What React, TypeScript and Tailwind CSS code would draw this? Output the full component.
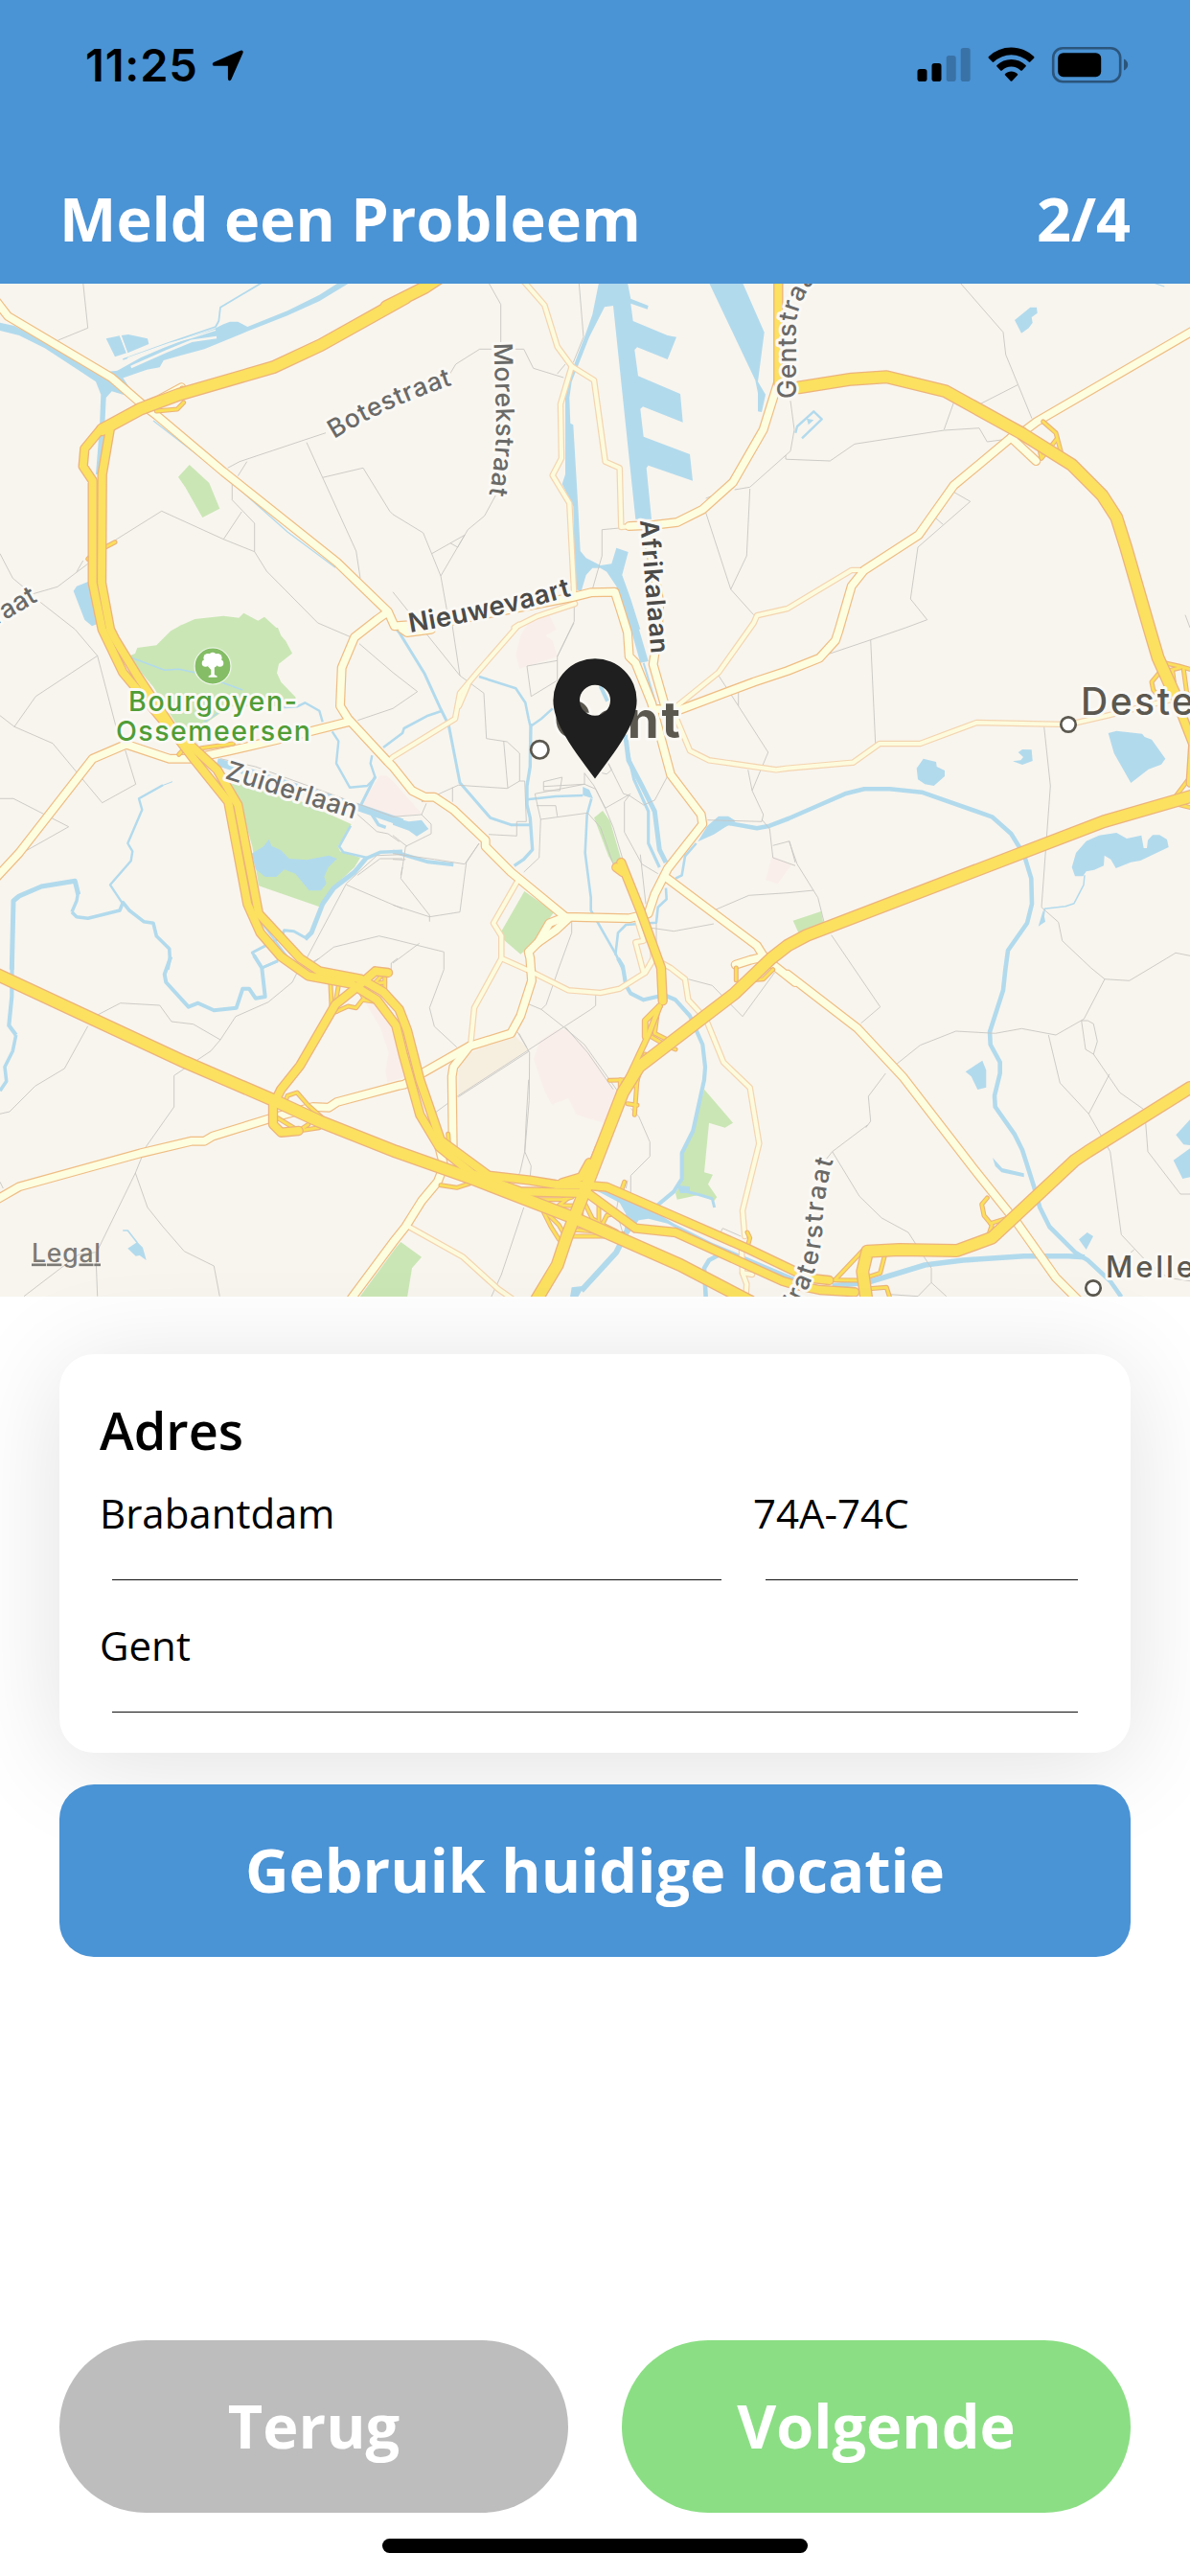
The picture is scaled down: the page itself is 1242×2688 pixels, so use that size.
import React from "react";

/* ------------------------------------------------------------------ */
/* Map geometry                                                        */
/* ------------------------------------------------------------------ */

/* The map is divided in nine tiles; tile units are a third of a pixel. */
const TILES: Record<string, [number, number]> = {
  A: [0, 295],
  B: [410, 295],
  C: [822, 295],
  D: [0, 650],
  E: [410, 650],
  F: [822, 650],
  G: [0, 1000],
  H: [410, 1000],
  I: [822, 1000],
};

/* "A 0,70 25,105 B 0,80" becomes an svg point list in page pixels. */
function pts(source: string): string {
  let [ox, oy] = TILES.A;
  const out: string[] = [];
  for (const token of source.split(" ")) {
    if (TILES[token]) {
      [ox, oy] = TILES[token];
    } else {
      const [x, y] = token.split(",").map(Number);
      out.push(`${(ox + x / 3).toFixed(1)},${(oy + y / 3).toFixed(1)}`);
    }
  }
  return out.join(" ");
}

const PARKS = [
  "A 558,608 593,570 655,627 688,707 634,735 580,640",
  "D 400,105 423,96 430,78 490,70 535,25 580,0 A 555,1078 610,1053 700,1043 748,1049 763,1034 808,1058 828,1046 865,1080 D 870,15 880,40 895,57 915,95 873,128 867,157 880,185 925,232 930,260 720,262 650,310 620,380 560,330 480,200",
  "D 700,470 760,500 900,540 1100,630 1058,700 1065,715 1128,735 1110,765 1040,830 1005,890 810,823 790,700 750,560",
  "E 630,610 657,588 680,620 715,740 690,755 675,730",
  "E 412,840 505,905 475,945 440,1000 400,1037 345,990 340,965",
  "F 17,932 105,903 112,940 35,972",
  "G 1125,1062 1240,905 H 25,888 90,935 60,970 45,1062",
  "H 975,410 1065,515 1040,530 990,515 975,670 1002,677 987,707 1015,748 1005,760 960,740 890,755 885,735 910,690 905,610 940,530",
];

const PINK = [
  "D 1130,570 1190,478 1210,478 1230,495 E 90,597 0,607 -10,603",
  "E 385,100 400,40 425,0 B 430,1060 490,1042 510,1080 E 512,20 478,40 500,55 515,105 397,143",
  "H 460,260 510,225 540,222 600,275 700,420 660,515 575,490 550,438 498,458 475,415 441,315",
  "G 1145,140 1200,150 1260,250 1275,370 1213,388 1207,355 1217,295 1190,215",
  "E 1187,730 1250,755 1205,817 1167,805",
];

const TAN = ["H 230,300 380,240 425,285 205,430 205,350"];

const LAKES = [
  "A 1060,0 1095,0 1000,58 900,103 780,150 640,208 565,228 512,243 500,265 460,272 380,300 355,320 350,285 440,235 510,205 600,170 670,145 700,130 720,122 745,122 775,138 900,88 1000,38",
  "A 332,175 375,166 397,220 360,232",
  "A 380,165 402,162 462,175 466,192 400,220",
  "A 0,125 45,135 160,195 260,245 320,280 370,275 440,380 400,355 350,340 332,360 328,450 325,560 310,600 300,600 312,450 316,350 300,310 240,270 140,205 60,165 0,150",
  "A 230,965 240,950 278,935 290,1000 305,1068 288,1075 265,1055",
  "D 788,722 825,700 842,678 850,698 880,712 905,738 960,742 1030,728 1055,738 1028,765 1015,795 1022,815 1005,838 968,838 925,785 890,772 865,795 830,795 800,770",
  "E 0,608 50,622 90,617 112,645 75,668 50,650 0,632",
  "E 595,513 615,522 627,550 595,540",
  "E 740,0 765,0 800,120 775,125",
  "E 955,685 985,635 1020,605 1050,605 1075,620 1040,640 1005,662",
  "F 404,455 425,425 465,435 467,450 492,462 492,480 458,510 430,505 408,490",
  "F 722,405 735,396 764,397 767,432 735,444 705,433 730,430 738,420",
  "F 1004,345 1030,338 1110,347 1118,357 1140,365 1183,425 1170,443 1130,458 1075,501 1022,408",
  "F 890,765 903,720 935,683 975,665 1030,657 1062,675 1108,665 1115,705 1125,705 1128,680 1143,664 1165,664 1188,678 1193,702 1105,744 1075,749 1028,768 1012,740 992,728 990,760 960,773 935,778 925,793 900,793",
  "F 800,900 807,935 785,950",
  "I 557,355 610,320 622,350 622,404 595,411 575,370",
  "I 642,624 672,657 740,673 740,685 670,670 650,650",
  "I 912,880 938,858 957,870 935,912",
  "I 1216,553 1260,505 1260,585 1240,583",
  "I 1208,632 1260,595 1260,685 1237,690",
  "C 711,117 760,77 780,77 782,95 764,108 767,125 755,142 732,158",
  "C 60,425 82,430 65,445",
  "B 645,0 735,0 745,50 800,72 797,83 745,65 752,120 860,165 888,170 860,240 765,202 757,210 768,292 900,348 908,437 783,388 775,395 785,482 930,537 939,620 800,572 794,580 810,740 760,740 690,72 663,76 615,170 560,310 553,360 556,440 565,445 580,700 587,840 605,862 650,885 685,880 700,830 737,843 718,915 745,990 775,1085 745,1085 700,950 670,905 650,893 625,893 605,915 590,965 570,960 565,700 530,630 540,600 540,400 540,330 600,170 625,100",
  "B 990,0 1095,0 1163,155 1143,310 1167,350 1155,405 1143,403 1143,345 1135,305",
  "H 640,728 690,735 800,780 880,830 1000,890 1060,915 1260,1000 1260,1015 1100,950 1000,905 860,830 800,815 770,820 740,860 725,855 730,800 710,765",
  "H 560,1030 600,1025 580,1060 555,1060",
  "H 890,710 930,715 930,735 900,735",
  "G 400,908 430,888 447,905 458,945 437,930 425,932",
];

/* [width, points] */
const RIVERS: [number, string][] = [
  [1.8, "A 820,0 690,77 685,120 675,138 530,188 385,240"],
  [1.4, "A 480,432 700,602 900,780 1050,892"],
  [1, "D 540,497 500,512"],
  [2.4, "D 510,508 435,550 445,585 400,690 415,715 410,745 345,820 385,880"],
  [5, "D 37,1085 42,870 60,855 130,825 235,808 245,850"],
  [3.4, "D 245,840 240,870 225,905"],
  [3.6, "D 225,905 240,920 275,925 375,900 385,875 405,900 450,935 480,940 490,980 530,1020 532,1050 525,1085"],
  [4.2, "G 38,-10 37,120 28,210 50,240"],
  [3.6, "G 50,240 40,290 15,340 20,385 0,415"],
  [4, "G 535,-5 515,50 520,75 590,152 620,140 670,163 740,155 760,95 780,95 800,125 830,120 820,30 795,-10"],
  [2.6, "G 820,30 870,8"],
  [3, "D 820,1080 790,1032 880,985 890,962 920,965 955,985"],
  [3, "D 820,1080 870,1058"],
  [2, "D 820,940 900,1045"],
  [5, "D 955,990 975,970 1010,880 1045,830 1110,780 1145,738"],
  [3.6, "D 1145,738 1190,718 1260,715"],
  [2.6, "D 1098,635 1062,700 1075,718 1150,735"],
  [8, "D 680,435 1130,580 1260,625"],
  [4, "E 0,715 110,748 190,757"],
  [3.4, "D 1165,600 1185,632 1208,640"],
  [1.5, "D 410,108 515,148 560,145 610,155 760,210"],
  [1.5, "D 640,310 700,270"],
  [2.4, "D 880,265 930,262 955,250 1000,275 1010,310"],
  [2.4, "D 1040,340 1060,370 1053,440 1095,515 1150,510 1175,485 1160,440 1165,415"],
  [3, "D 1175,480 1130,570"],
  [2.6, "D 1200,390 1260,345 E 35,330 110,290 150,277"],
  [3, "A 1225,1065 E 20,30 100,160 150,270 175,320 210,500 305,610 370,632 430,632"],
  [2.6, "E 270,168 385,205 415,250 425,300 430,320"],
  [3.4, "E 432,315 430,450 420,510 420,570 430,610 437,710 410,740 380,760"],
  [2.4, "E 430,325 465,300 500,268"],
  [2.4, "E 420,553 510,543 595,540"],
  [2.6, "E 622,550 608,600 602,720 620,860 620,900 660,970 700,1040 720,1085"],
  [4.2, "E 705,1050 H 705,0 720,25 730,85 745,110 785,130 850,115 885,130 930,180 970,270 978,340 975,380 940,540 905,610 905,690 880,730 820,780"],
  [2.6, "E 697,1040 705,970 730,945 825,938 830,890 857,865 855,830"],
  [4, "E 650,198 672,245"],
  [5, "E 728,350 738,430 780,510 820,590 835,710 855,750"],
  [3.2, "E 735,400 755,490 800,590 800,690 835,765"],
  [2, "E 785,125 825,260"],
  [2.6, "E 885,800 905,790 915,730 950,690"],
  [4.6, "E 1040,625 1140,643 1180,635 1240,612 F 100,570 180,535 240,520 320,520 420,530 640,607 700,660 740,725 763,800 765,880 750,940 690,1025 682,1085 I 675,100 633,230 635,270 665,325 665,360 648,430 650,465 710,550 735,600 770,710 790,780 820,840 900,920 940,945 1010,1010 1045,1060"],
  [5.6, "I 930,935 880,932 740,932 550,945 430,960 250,1015 140,1025"],
  [1.5, "F 930,790 927,820 897,878 870,887 805,895 800,930"],
  [2.4, "C 45,487 107,427 82,403 30,450 25,470"],
  [1.2, "C 1145,0 1180,12"],
  [6, "H 735,850 700,920 590,1040"],
  [4.6, "H 1040,918 990,945 975,970 980,1062"],
  [3, "H 900,725 960,740 1000,752 1007,780"],
  [1.6, "G 385,852 400,852 430,890"],
];

/* Narrow dams in the canal basin */
const SLITS: [number, string][] = [
  [1.4, "A 400,236 530,190 600,172 675,148"],
  [2.6, "A 410,264 520,215 600,182 678,171"],
  [1.2, "A 376,164 398,222"],
];

const LANES = [
  "A 260,0 275,142 182,180 182,190",
  "A 713,580 750,560 960,490 1020,470",
  "A 960,500 1010,610 1115,840 1128,925",
  "A 1010,610 1137,580 1220,715 B 0,725 95,783 150,918 170,1030",
  "A 745,605 773,560",
  "A 727,630 727,680 797,753 797,842 700,803 506,715 362,805",
  "A 700,803 757,717",
  "A 797,842 835,903 995,1065 D 1095,43",
  "A 0,848 40,925 100,975 180,952 275,880",
  "A 240,905 260,870",
  "A 120,995 235,1085 D 305,103",
  "B 300,0 338,68 338,190",
  "B 170,300 197,255 272,208 410,208 440,268 535,297",
  "B 515,285 540,255",
  "B 583,0 597,170 565,250",
  "B 325,660 287,730 235,773 150,918",
  "B 122,848 225,790",
  "B 180,815 203,828 225,790",
  "B 710,768 655,773 655,855 625,960",
  "B 980,720 1058,960 1130,1040",
  "B 1118,645 1108,855 1058,960",
  "B 1245,370 1257,460 1245,527 1118,640 1070,648",
  "B 1070,640 980,675",
  "B 1230,540 1230,552 C 0,553 133,558 210,505 490,462 600,455 625,498 700,488",
  "B 568,1010 568,1060 E 515,105 515,180 433,230 420,135 515,118",
  "C 540,0 675,155 683,225 765,425",
  "C 720,320 602,380 520,340",
  "C 522,370 490,460",
  "C 520,655 572,685 408,828 385,990 437,1055 370,1080 F 260,53 130,97",
  "F 260,53 275,378",
  "C 465,738 487,757",
  "C 1245,1040 1260,1080",
  "D 305,103 375,370",
  "D 305,103 112,230 45,325",
  "D 0,290 45,325 165,377 320,563 425,505 392,398",
  "D 0,550 42,550 215,638 75,717",
  "D 1125,65 1230,155 E 77,215 0,268 D 1120,305",
  "D 690,425 800,450 1130,570 E 0,607 90,600 105,565",
  "D 1120,600 1180,653 1215,660 1250,685",
  "D 1260,725 1180,728 1085,815 960,1050",
  "D 1260,738 1190,738 1120,790",
  "D 1085,820 1260,895",
  "D 980,1065 1045,1015 1187,980 1230,990 E 160,1030 160,1085 H 160,35 115,155 130,213 200,278",
  "D 1260,765 1255,790",
  "E 185,0 210,165 285,220 293,362 358,372 397,408 397,495 358,518 205,508 90,560",
  "B 0,968 E 210,165",
  "E 347,370 360,518",
  "E 187,515 187,560",
  "E 90,600 120,630 120,660 40,700 25,800 115,915 115,935",
  "E 40,740 30,742 0,740",
  "E 0,665 45,700",
  "E 0,883 115,920 210,905 230,750 270,690",
  "E 0,722 130,740 225,755 270,690",
  "E 410,780 458,735 463,615 445,535 600,505 635,520 665,580 745,535",
  "E 472,525 472,497 530,483 523,525 472,525",
  "E 472,512 600,505",
  "E 450,572 510,572 515,605",
  "E 463,615 610,595 650,640 690,755",
  "E 300,662 388,667 388,622 418,622 413,495 397,495",
  "E 600,505 600,470 630,510 665,580 690,640 720,740",
  "E 655,470 670,473 685,460 675,440 722,535 740,540 785,570 820,555 860,480",
  "E 740,540 725,560 725,655 780,755 830,785",
  "E 775,725 792,880",
  "E 810,955 880,965 1005,942",
  "E 825,940 825,1000",
  "E 1005,900 1115,853 1236,845 F 82,837",
  "E 1020,165 1082,260 1175,405 1125,525 1160,600 1155,622 985,617",
  "E 1112,460 1125,525",
  "E 1082,215 1082,260",
  "E 1155,615 1180,645 1190,735 1260,760",
  "E 1190,697 1242,683 1260,750",
  "E 560,935 560,970 520,1080 H 480,145 465,160 425,143",
  "E 0,1065 83,1003",
  "E 567,0 515,105",
  "H 465,160 535,215 620,160 635,148 635,115",
  "H 535,215 600,270 700,410 735,460",
  "H 540,215 610,295 690,410",
  "H 535,215 423,288 205,430 130,485",
  "H 425,292 205,434",
  "H 390,230 428,295 427,445 413,605 433,650 430,685",
  "H 395,235 420,280",
  "H 425,380 418,500 413,605 398,670 390,685",
  "H 745,470 770,495 805,575 805,620 745,680 745,735",
  "H 735,695 730,720",
  "H 410,780 340,990 308,1060",
  "H 925,65 1000,85 1095,182 1195,45",
  "H 705,760 700,790 720,860",
  "H 1025,860 1033,845 1090,870",
  "F 803,325 823,510 795,890 848,937 860,995 950,1080 I 993,65 1070,70 1187,0 F 1215,1033 1260,1042",
  "F 5,685 30,755 95,860 115,940",
  "F 137,977 207,1080 I 290,152 230,203",
  "I 993,65 928,190 840,240 733,220 650,235 527,228 415,272 340,332",
  "I 307,360 253,432 260,510 245,530",
  "I 250,522 140,605 120,630",
  "I 140,605 225,745 295,813 378,858 405,900 450,970 450,1015 497,1058",
  "I 450,1015 408,1058 320,1052",
  "I 817,240 853,390 943,487 1010,605 1045,865 1125,950 1190,1000 1260,1010",
  "I 1085,912 1030,960",
  "I 943,487 1008,362",
  "I 920,195 933,285 958,300 1040,420 1118,475 1128,605 1230,738 1260,738",
  "I 920,195 940,195 958,205 970,260 958,300",
  "G 0,487 30,480 110,400 202,345 275,212",
  "G 300,180 377,140 500,147 537,198 605,206 690,255 738,182 840,137 915,75 935,35 1000,0",
  "G 1225,40 1225,15 1245,0",
  "G 690,255 660,290 545,367 545,465 457,590 424,672 305,915 300,925 305,1058",
  "G 424,672 462,780 510,840 577,917 670,963 688,1058",
  "G 75,1058 245,928 300,920",
  "G 0,700 10,720",
];

const LOCAL_ROADS = [
  "B 570,1005 450,1045 380,1080 E 395,5 260,160 210,220 195,300 0,420 D 1215,435",
  "E 235,195 207,260",
  "B 405,-10 475,70 515,200 560,262 525,380 528,550 500,603 553,690 568,980",
  "B 560,262 630,305 665,560 710,580 715,765 770,760",
  "C 240,900 200,900 0,1020 B 1140,1042 E 1130,0 1020,155 890,260",
  "E 880,280 930,400 990,430 1200,460 F 0,455 205,437 288,378 415,378 592,312 880,318 1000,290 1180,245 1260,225",
  "H 50,840 220,935 330,1035 380,1070",
  "E 395,800 315,940 340,980 340,1050 H 255,155 243,275",
  "E 340,1050 430,1090 H 550,100 650,108 710,95 790,45 815,0 E 870,1080 915,1115 H 925,130 980,190 1035,325 1118,405 1147,580 1095,790 1102,870",
  "E 765,930 785,995 760,1000 785,1095",
  "E 815,1000 815,1055 790,1095",
  "H 1092,910 1095,985 1108,1020 1105,1065",
  "H 1095,985 1125,990",
];

const MAIN_ROADS = [
  "A -10,60 25,105 350,298 450,385 490,415 700,592 1055,875 1215,1030 B 5,1075 150,1065 380,1020 560,985 620,970 695,968 715,1030 E 735,30 740,105 760,125 810,250 850,400 870,475 965,600 970,630 860,770 820,850 800,910 740,925 540,920 370,780 290,700 290,680 190,585 130,545 100,545 60,525 0,450 D 1215,435 1090,300 1065,260 1070,140 1110,45 1180,-10 A 1215,1030",
  "E 30,20 45,30 120,20",
  "D -10,795 60,720 290,425 395,380 530,425 600,425 720,400 870,365 1090,310",
  "G -10,755 60,715 440,610 600,572 640,572 665,557 850,500 980,465 1030,467 1055,450 1250,398 H 35,395 95,358 240,275 370,235 400,180 435,70 430,0 E 425,1030 455,1000 490,940 540,920",
  "E 455,1000 510,962 550,925",
  "H 240,275 190,340 185,370 188,590",
  "H 145,590 160,650 140,700 90,760 40,840 0,890 G 1100,1065",
  "E 860,800 1140,1010 1165,1050 H 1260,75 I 0,50 220,220 360,370 580,655 720,830 840,1000 920,1080",
  "E 1165,1045 1120,1055 1073,1070",
  "C 1270,150 780,435 740,465 700,485 520,635 410,790 240,900 200,950 160,1090 F 150,55 100,110 0,150 E 1130,185 890,275 830,270",
  "C 700,485 778,558",
  "B 740,762 820,758 890,750 970,710 1065,625 1160,460 1207,310",
  "B 800,760 805,830 835,1000 E 830,30 815,130 855,270",
  "A 450,385 500,365 568,328",
];

const RAMPS = [
  "A 570,330 605,338",
  "A 490,402 555,396 575,375",
  "A 330,828 360,812",
  "A 275,865 290,850",
  "C 800,435 840,470 860,545",
  "C 842,490 795,550 790,525",
  "C 680,430 740,460",
  "D 560,412 585,385",
  "D 630,392 730,378",
  "F 1180,125 1225,135 1260,145",
  "F 1190,150 1230,140",
  "F 1165,155 1140,185 1145,210 1165,235",
  "F 1205,150 1212,200",
  "F 1240,145 1250,220",
  "F 1210,550 1270,470",
  "F 1210,565 1270,580",
  "G 1035,80 1038,150 1055,165",
  "G 1060,85 1052,130",
  "G 1050,168 1090,150 1115,155 1135,130 1170,135",
  "G 1120,90 1140,125",
  "G 1205,50 1205,105",
  "G 1205,75 1170,80 1195,55",
  "G 895,445 900,430 930,420 965,460 1010,500",
  "G 870,500 935,540 1000,530",
  "G 935,540 965,520",
  "H 150,710 200,718 240,705",
  "H 173,550 176,600",
  "H 420,755 530,755 560,748",
  "H 550,750 520,773 570,775",
  "H 470,790 495,840 520,880",
  "H 485,800 520,835 535,860",
  "H 530,890 570,850 640,855",
  "H 560,870 680,870 720,862",
  "H 600,765 625,815 650,830 700,855",
  "H 645,770 645,825",
  "H 690,800 670,805 655,835",
  "H 590,790 590,820",
  "H 725,700 713,735",
  "H 1110,858 1118,875 1110,905",
  "H 600,690 640,590",
  "H 830,160 820,235 860,255",
  "H 800,240 860,275 885,285",
  "H 678,382 740,380",
  "H 712,380 712,430",
  "H 735,455 765,460",
  "H 765,380 757,490",
  "H 790,300 760,400",
  "H 1075,30 1075,68",
  "H 1190,35 1160,65 1100,70",
  "H 1150,45 1120,65",
  "I 150,1005 240,910",
  "I 140,1007 230,1008",
  "I 303,935 290,985 220,1008",
  "I 245,1035 310,1030 320,1062",
  "I 625,750 608,770 615,805 640,835 630,865",
  "I 635,830 700,810",
];

const CARRIAGEWAYS = [
  "A 310,465 265,520 260,575 290,620 290,940 320,1085 D 385,155 560,365 610,430 715,560 775,880 815,970 880,1045 G 965,55 1100,80 1180,130 1240,210 1262,300 H 85,490 145,590 250,675 400,730 600,735",
  "A 345,455 320,600 318,940 345,1085 D 360,50 430,165 540,330 680,460 745,570 810,910 940,1050 G 1000,40 1130,65 1200,105 1250,160 H 45,225 85,380 150,570 300,680 430,695 510,708 600,710 670,716 890,812 1110,908 1270,985 I 60,1000 130,1008",
  "H 610,735 760,845 885,858 1220,1010 1260,1022 I 100,1038 210,1045",
  "G 1215,45 1175,40 1130,80 1050,145 940,335 880,410 855,460 855,520 880,545 935,540",
  "H 530,703 590,685 615,640",
  "B 1207,-10 1207,315",
  "E 715,750 775,900 840,1080 H 845,133",
  "E 700,765 720,780",
  "F 1200,200 1270,380 1262,500",
];

const FEEDERS = ["H 835,150 800,240 725,400", "H 835,150 790,195 790,245"];

const MOTORWAYS = [
  "A 1270,47 1005,195 855,265 560,350 440,395 320,460",
  "B -20,75 100,15 160,-25",
  "G -10,50 580,325 870,450 1000,510 1240,605 H 250,690 560,810 900,960 1120,1075",
  "H 440,1085 515,960 545,870 600,730 720,420 770,340 1070,110 1185,0 F 0,1010 60,978 990,622 1280,538",
  "C 35,328 200,302 310,295 495,340 730,470 890,570 985,665 1030,735 1060,830 1135,1090 F 1160,110 1210,220",
  "I 248,1075 235,980 250,917 350,912 530,915 640,875 900,632 940,605 1260,405",
];

function Strokes({ list, width, color, cap = "round" }: { list: string[]; width: number; color: string; cap?: "round" | "butt" }) {
  return (
    <g fill="none" stroke={color} strokeWidth={width} strokeLinejoin="round" strokeLinecap={cap}>
      {list.map((line) => (
        <polyline key={line} points={pts(line)} />
      ))}
    </g>
  );
}

function Areas({ list, color }: { list: string[]; color: string }) {
  return (
    <g fill={color}>
      {list.map((area) => (
        <polygon key={area} points={pts(area)} />
      ))}
    </g>
  );
}

function PathLabel({ id, d, size, length, weight = 500, color = "#6a6a68", anchorEnd = false, children }: {
  id: string;
  d: string;
  size: number;
  length?: number;
  weight?: number;
  color?: string;
  anchorEnd?: boolean;
  children: string;
}) {
  return (
    <>
      <path id={id} d={d} fill="none" stroke="none" />
      <text fontSize={size} fontWeight={weight} fill={color} textLength={length} textAnchor={anchorEnd ? "end" : "start"}>
        <textPath href={`#${id}`} startOffset={anchorEnd ? "100%" : "0"} textLength={length}>
          {children}
        </textPath>
      </text>
    </>
  );
}

function CityMap() {
  return (
    <svg viewBox="0 296 1242 1057" className="block h-[1057px] w-[1242px] bg-[#f8f5ee]" aria-label="Kaart van Gent">
      <Areas list={PARKS} color="#cae6b5" />
      <Areas list={PINK} color="#f9eeea" />
      <Areas list={TAN} color="#f6eedf" />
      <Areas list={LAKES} color="#b2daed" />
      <g fill="none" stroke="#b2daed" strokeLinejoin="round">
        {RIVERS.map(([w, line]) => (
          <polyline key={line} points={pts(line)} strokeWidth={w} />
        ))}
      </g>
      <g fill="none" stroke="#f8f5ee">
        {SLITS.map(([w, line]) => (
          <polyline key={line} points={pts(line)} strokeWidth={w} />
        ))}
      </g>
      <Strokes list={LANES} width={0.9} color="#c8c6c2" cap="butt" />

      <Strokes list={LOCAL_ROADS} width={6.6} color="#f4d4b0" />
      <Strokes list={MAIN_ROADS} width={10} color="#efbd84" />
      <Strokes list={LOCAL_ROADS} width={4.2} color="#fdfbdd" />
      <Strokes list={MAIN_ROADS} width={7.6} color="#fdfde0" />

      <Strokes list={RAMPS} width={5} color="#ecb479" />
      <Strokes list={RAMPS} width={2.8} color="#fbdf5a" />
      <Strokes list={FEEDERS} width={7} color="#edb37c" />
      <Strokes list={CARRIAGEWAYS} width={10.4} color="#edb37c" />
      <Strokes list={MOTORWAYS} width={14} color="#edb37c" />
      <Strokes list={FEEDERS} width={4.6} color="#fbe15f" />
      <Strokes list={CARRIAGEWAYS} width={7.8} color="#fbe15f" />
      <Strokes list={MOTORWAYS} width={11.4} color="#fbe15f" />

      <g
        className="font-['Inter',sans-serif]"
        stroke="#fbf9f5"
        strokeWidth={6}
        strokeLinejoin="round"
        style={{ paintOrder: "stroke" }}
      >
        <PathLabel id="botestraat" d="M349 458 Q410 420 490 396" size={26.5} length={136}>
          Botestraat
        </PathLabel>
        <PathLabel id="morekstraat" d="M515.500 358 L518 440 Q518 480 508 530" size={26.5} length={159}>
          Morekstraat
        </PathLabel>
        <PathLabel id="nieuwevaart" d="M428 660 Q520 645 612 617" size={27.5} length={173} weight={600} color="#4b4b49">
          Nieuwevaart
        </PathLabel>
        <PathLabel id="afrikalaan" d="M668 543 L681 700" size={26.5} length={140} weight={600} color="#4b4b49">
          Afrikalaan
        </PathLabel>
        <PathLabel id="gentstraat" d="M831 416 L831 335 Q834 313 852 290 L880 262" size={26.5} length={142}>
          Gentstraat
        </PathLabel>
        <PathLabel id="fraterstraat" d="M827 1373 Q853 1335 858 1290 Q858 1245 873 1200" size={26.5} length={170}>
          Fraterstraat
        </PathLabel>
        <PathLabel id="zuiderlaan" d="M234 812 L390 861" size={27} length={142}>
          Zuiderlaan
        </PathLabel>
        <PathLabel id="straat" d="M-60 685 L40 627" size={27} anchorEnd>
          straat
        </PathLabel>
        <g fill="#509d36" fontSize={28.5} fontWeight={500}>
          <text x={134} y={741.5} textLength={176}>Bourgoyen-</text>
          <text x={121} y={772.500} textLength={203}>Ossemeersen</text>
        </g>
        <g fill="#5b5850" fontWeight={500}>
          <text x={1128} y={746} fontSize={39} textLength={118}>Deste</text>
          <text x={1154} y={1333} fontSize={31} textLength={92}>Melle</text>
        </g>
        <text x={578} y={770} fontSize={53} fontWeight={700} fill="#5b5850" textLength={132}>Gent</text>
      </g>

      <g fill="#ffffff" stroke="#5b5850" strokeWidth={2.700}>
        <circle cx={563.3} cy={782.3} r={9.2} />
        <circle cx={1115} cy={756} r={7.7} />
        <circle cx={1141} cy={1344} r={7.7} />
      </g>

      <circle cx={222} cy={695} r={19} fill="#84bd65" stroke="#f1f7ec" strokeWidth={1.2} />
      <g fill="#ffffff">
        <circle cx={217} cy={686.5} r={4.6} />
        <circle cx={222} cy={685} r={4.200} />
        <circle cx={227} cy={686.5} r={4.6} />
        <circle cx={214.500} cy={692} r={3.8} />
        <circle cx={229.500} cy={692} r={3.8} />
        <circle cx={222} cy={692} r={5} />
        <path d="M220.600 692h3.200v12l2.800 1.500v1.200h-9v-1.200l2.700-1.500v-5l-3.600-4z" />
      </g>

      <path
        d="M621 687.200a43.600 43.600 0 0 1 43.600 43.600c0 25-22 52.500-43.600 81.600c-21.600-29.100-43.600-56.600-43.600-81.600a43.600 43.600 0 0 1 43.600-43.600zm0 27.600a16 16 0 1 0 0 32a16 16 0 0 0 0-32z"
        fill="#1f1f1f"
        fillRule="evenodd"
      />

      <text x={33} y={1316.500} fontSize={26.500} fontWeight={500} fill="#7c7a76" textLength={72} className="font-['Inter',sans-serif] underline decoration-[2.500px] underline-offset-[3px]">
        Legal
      </text>
    </svg>
  );
}

/* ------------------------------------------------------------------ */
/* Status bar                                                          */
/* ------------------------------------------------------------------ */

function StatusIcons() {
  return (
    <svg viewBox="957 48 221 40" className="h-10 w-[221px]" aria-hidden="true">
      <rect x={957.5} y={72} width={10} height={13} rx={2.800} />
      <rect x={972.5} y={66} width={10} height={19} rx={2.800} />
      <rect x={987.700} y={58} width={10} height={27} rx={2.800} opacity={0.22} />
      <rect x={1002.700} y={50} width={10} height={35} rx={2.800} opacity={0.22} />
      <path d="M1055.500 49.500c9.200 0 17.500 3.600 23.600 9.500c.5.500.5 1.200 0 1.700l-3.800 3.800c-.5.500-1.100.5-1.600 0a26.500 26.500 0 0 0-36.400 0c-.5.500-1.100.5-1.600 0l-3.800-3.800c-.5-.5-.5-1.200 0-1.700a34 34 0 0 1 23.600-9.500z" />
      <path d="M1055.500 62c5.800 0 11 2.200 15 5.900c.5.500.5 1.200 0 1.700l-3.700 3.800c-.5.500-1.100.5-1.600 0a14.300 14.300 0 0 0-19.400 0c-.5.500-1.100.5-1.600 0l-3.700-3.800c-.5-.5-.5-1.200 0-1.700c4-3.700 9.200-5.900 15-5.900z" />
      <path d="M1055.500 74.500c2.500 0 4.700.9 6.400 2.400c.5.500.5 1.200 0 1.700l-5.600 5.800c-.5.500-1.100.5-1.600 0l-5.600-5.800c-.5-.5-.5-1.200 0-1.700c1.700-1.500 3.900-2.400 6.400-2.400z" />
      <rect x={1099.200} y={50.200} width={70} height={35} rx={10} fill="none" stroke="#000" strokeWidth={2.600} opacity={0.42} />
      <path d="M1173 61.500c2.500 1 4.200 3.400 4.200 6s-1.700 5-4.200 6z" opacity={0.42} />
      <rect x={1104.200} y={55.200} width={45} height={25} rx={5.500} />
    </svg>
  );
}

function Header() {
  return (
    <header className="flex h-[296px] flex-col justify-between bg-[#4a93d5]">
      <div className="flex items-center justify-between pt-[47px] pr-[64px] pl-[89px]">
        <div className="flex items-center gap-[12px]">
          <span className="w-[120px] font-['Inter',sans-serif] text-[47px] leading-[42px] font-semibold tracking-[0.8px] whitespace-nowrap text-black">11:25</span>
          <svg viewBox="0 0 33 33" className="h-[33px] w-[33px] overflow-visible" aria-hidden="true">
            <path
              d="M30.300 1.500c1.200-.6 2 .2 1.500 1.400L19.700 30.500c-.6 1.300-2 1.100-2-.4V17c0-.7-.3-1-1-1H2.800c-1.500 0-1.700-1.500-.4-2.200z"
              stroke="#000"
              strokeWidth={1.600}
              strokeLinejoin="round"
            />
          </svg>
        </div>
        <StatusIcons />
      </div>
      <div className="flex justify-between px-[62px] pb-[24px] text-[63px] leading-[88px] font-bold text-white">
        <h1>Meld een Probleem</h1>
        <span>2/4</span>
      </div>
    </header>
  );
}

function Field({ value, className }: { value: string; className: string }) {
  return (
    <div className={className}>
      <p className="text-[42px] leading-[58px] text-black">{value}</p>
      <div className="mt-[40px] mr-[13px] ml-[13px] h-px bg-[#111111]" />
    </div>
  );
}

export default function App() {
  return (
    <div className="flex h-[2688px] w-[1242px] flex-col overflow-hidden bg-white font-['Open_Sans',sans-serif]">
      <Header />
      <CityMap />

      <main className="flex flex-1 flex-col px-[62px] pt-[60px]">
        <section className="h-[416px] rounded-[36px] bg-white px-[42px] pt-[42px] shadow-[0_12px_110px_rgba(0,0,0,0.12)]">
          <h2 className="text-[54px] leading-[74px] font-semibold text-black">Adres</h2>
          <div className="mt-[21px] flex">
            <Field value="Brabantdam" className="w-[682px] pr-[20px]" />
            <Field value="74A-74C" className="w-[352px]" />
          </div>
          <Field value="Gent" className="mt-[39px] w-[1034px]" />
        </section>

        <button className="relative mt-[33px] h-[180px] shrink-0 rounded-[36px] bg-[#4a93d5] pb-[3px] text-[63px] leading-none font-bold text-white">
          Gebruik huidige locatie
        </button>

        <div className="mt-auto flex gap-[56px]">
          <button className="h-[180px] flex-1 rounded-full bg-[#bdbdbd] pb-[3px] text-[63px] leading-none font-bold text-white">Terug</button>
          <button className="h-[180px] flex-1 rounded-full bg-[#8bde84] pb-[3px] text-[63px] leading-none font-bold text-white">Volgende</button>
        </div>
        <div className="mx-auto mt-[27px] mb-[24px] h-[15px] w-[444px] shrink-0 rounded-full bg-black" />
      </main>
    </div>
  );
}
